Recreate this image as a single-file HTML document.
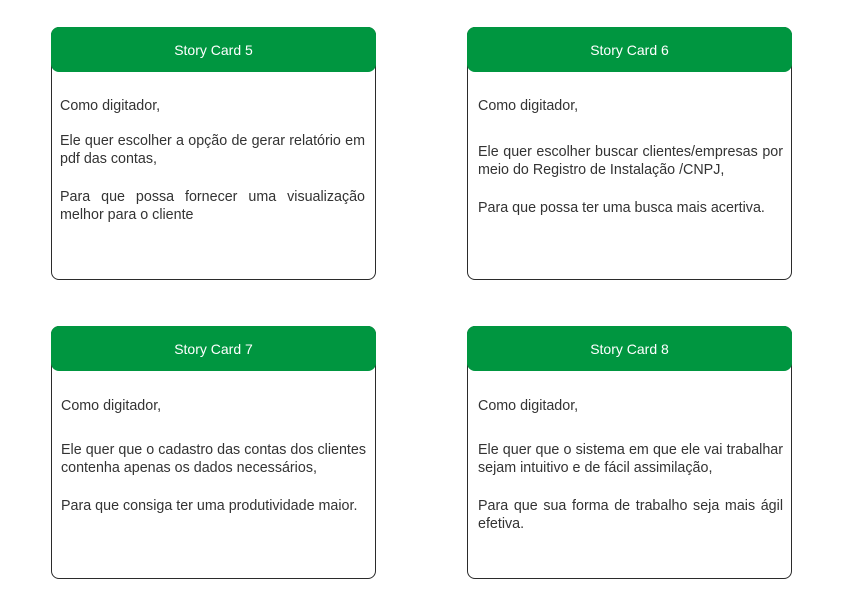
<!DOCTYPE html>
<html><head><meta charset="utf-8"><style>
body{margin:0;width:849px;height:602px;background:#fff;position:relative;overflow:hidden;font-family:"Liberation Sans",sans-serif;}
.card{position:absolute;width:323px;height:251px;border:1px solid #2b2b2b;border-radius:8px;background:#fff;}
.hd{position:absolute;left:-1px;top:-1px;width:325px;height:45px;background:#009640;border-radius:8px;color:#fff;font-size:14px;text-align:center;line-height:47px;}
.l{position:absolute;font-size:14.3px;color:#333;white-space:nowrap;line-height:18px;}
.j{text-align:justify;text-align-last:justify;width:305px;}
</style></head><body>
<div class="card" style="left:51px;top:27px"><div class="hd">Story Card 5</div>
<div class="l" style="left:8px;top:69px">Como digitador,</div>
<div class="l j" style="left:8px;top:104px">Ele quer escolher a opção de gerar relatório em</div>
<div class="l" style="left:8px;top:122px">pdf das contas,</div>
<div class="l j" style="left:8px;top:160px">Para que possa fornecer uma visualização</div>
<div class="l" style="left:8px;top:178px">melhor para o cliente</div>
</div>
<div class="card" style="left:467px;top:27px"><div class="hd">Story Card 6</div>
<div class="l" style="left:10px;top:69px">Como digitador,</div>
<div class="l j" style="left:10px;top:115px">Ele quer escolher buscar clientes/empresas por</div>
<div class="l" style="left:10px;top:133px">meio do Registro de Instalação /CNPJ,</div>
<div class="l" style="left:10px;top:171px">Para que possa ter uma busca mais acertiva.</div>
</div>
<div class="card" style="left:51px;top:326px"><div class="hd">Story Card 7</div>
<div class="l" style="left:9px;top:70px">Como digitador,</div>
<div class="l j" style="left:9px;top:114px">Ele quer que o cadastro das contas dos clientes</div>
<div class="l" style="left:9px;top:132px">contenha apenas os dados necessários,</div>
<div class="l" style="left:9px;top:170px">Para que consiga ter uma produtividade maior.</div>
</div>
<div class="card" style="left:467px;top:326px"><div class="hd">Story Card 8</div>
<div class="l" style="left:10px;top:70px">Como digitador,</div>
<div class="l j" style="left:10px;top:114px">Ele quer que o sistema em que ele vai trabalhar</div>
<div class="l" style="left:10px;top:132px">sejam intuitivo e de fácil assimilação,</div>
<div class="l j" style="left:10px;top:170px">Para que sua forma de trabalho seja mais ágil</div>
<div class="l" style="left:10px;top:188px">efetiva.</div>
</div>
</body></html>
